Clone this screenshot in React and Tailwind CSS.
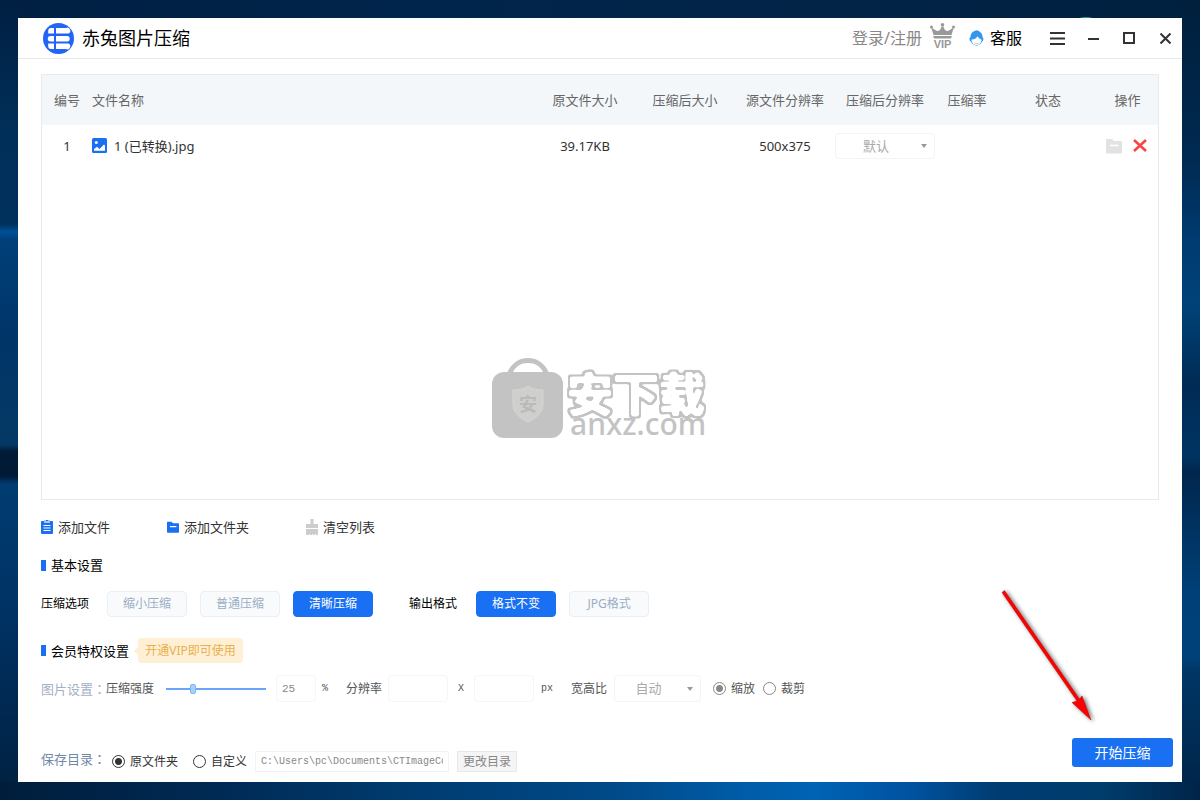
import React, { useState } from 'react';

const columns = [
    { key: 'id', label: '编号', className: 'w-[50px] text-center' },
    { key: 'name', label: '文件名称', className: 'text-left' },
    { key: 'size', label: '原文件大小', className: 'w-[100px] text-center' },
    { key: 'newSize', label: '压缩后大小', className: 'w-[100px] text-center' },
    { key: 'dim', label: '源文件分辨率', className: 'w-[100px] text-center' },
    { key: 'newDim', label: '压缩后分辨率', className: 'w-[100px] text-center' },
    { key: 'ratio', label: '压缩率', className: 'w-[64px] text-center' },
    { key: 'status', label: '状态', className: 'w-[98px] text-center' },
    { key: 'action', label: '操作', className: 'w-[61px] text-center' },
];

const files = [{ id: 1, name: '1 (已转换).jpg', size: '39.17KB', dim: '500x375' }];

function Wallpaper() {
    return (
        <svg className="absolute inset-0 w-full h-full" viewBox="0 0 1200 800" preserveAspectRatio="none" aria-hidden="true">
            <defs>
                <linearGradient id="top" x1="0" x2="1" y1="0" y2="0">
                    <stop offset="0" stopColor="#001f42" />
                    <stop offset="0.35" stopColor="#00254c" />
                    <stop offset="0.7" stopColor="#022447" />
                    <stop offset="1" stopColor="#00203f" />
                </linearGradient>
                <linearGradient id="left" x1="0" x2="0" y1="0" y2="1">
                    <stop offset="0" stopColor="#001f42" />
                    <stop offset="0.17" stopColor="#00305a" />
                    <stop offset="0.28" stopColor="#00305c" />
                    <stop offset="0.29" stopColor="#005099" />
                    <stop offset="0.3" stopColor="#003f78" />
                    <stop offset="0.42" stopColor="#003569" />
                    <stop offset="0.555" stopColor="#053964" />
                    <stop offset="0.565" stopColor="#011a36" />
                    <stop offset="0.595" stopColor="#011a36" />
                    <stop offset="0.605" stopColor="#003c70" />
                    <stop offset="0.75" stopColor="#003366" />
                    <stop offset="1" stopColor="#00203f" />
                </linearGradient>
                <linearGradient id="right" x1="0" x2="0" y1="0" y2="1">
                    <stop offset="0" stopColor="#001f3c" />
                    <stop offset="0.2" stopColor="#002a52" />
                    <stop offset="0.3" stopColor="#003a70" />
                    <stop offset="0.38" stopColor="#004379" />
                    <stop offset="0.48" stopColor="#002b55" />
                    <stop offset="0.57" stopColor="#003463" />
                    <stop offset="0.59" stopColor="#00264d" />
                    <stop offset="0.74" stopColor="#004078" />
                    <stop offset="0.82" stopColor="#00417a" />
                    <stop offset="0.84" stopColor="#003665" />
                    <stop offset="1" stopColor="#002347" />
                </linearGradient>
                <linearGradient id="bottom" x1="0" x2="1" y1="0" y2="0">
                    <stop offset="0" stopColor="#001d3b" />
                    <stop offset="0.18" stopColor="#002a54" />
                    <stop offset="0.35" stopColor="#003c71" />
                    <stop offset="0.52" stopColor="#004b8a" />
                    <stop offset="0.62" stopColor="#005ca8" />
                    <stop offset="0.68" stopColor="#0063b4" />
                    <stop offset="0.76" stopColor="#0052a0" />
                    <stop offset="0.83" stopColor="#003c72" />
                    <stop offset="0.92" stopColor="#003c6c" />
                    <stop offset="1" stopColor="#002449" />
                </linearGradient>
            </defs>
            <rect width="1200" height="18" fill="url(#top)" />
            <rect width="18" height="800" fill="url(#left)" />
            <rect x="1182" width="18" height="800" fill="url(#right)" />
            <rect y="782" width="1200" height="18" fill="url(#bottom)" />
            <ellipse cx="1086" cy="19" rx="7" ry="2" fill="#3b9c93" />
        </svg>
    );
}

function Logo() {
    return (
        <svg width="31" height="31" viewBox="0 0 31 31" aria-hidden="true">
            <circle cx="15.5" cy="15.5" r="15.5" fill="#2264f6" />
            <g fill="#fff">
                <path d="M8 5h3v5.500H5.200V8A3 3 0 0 1 8 5z" />
                <path d="M13 5h10a2.750 2.750 0 0 1 2.500 5.500H13z" />
                <path d="M11 13v5.500H7.500a2.750 2.750 0 0 1 0-5.500z" />
                <path d="M13 13h11a2.750 2.750 0 0 1 0 5.500H13z" />
                <path d="M5.200 20.500H11V26H8a3 3 0 0 1-2.800-3z" />
                <path d="M13 20.500h12.500A2.750 2.750 0 0 1 23 26H13z" />
            </g>
        </svg>
    );
}

function VipIcon() {
    return (
        <svg className="overflow-visible" width="25" height="26" viewBox="0 0 25 26" fill="#999" aria-hidden="true">
            <circle cx="12.500" cy="1.800" r="1.800" />
            <circle cx="1.500" cy="4" r="1.500" />
            <circle cx="23.500" cy="4" r="1.500" />
            <path d="M1.200 4.500l5.300 3.300c2 .6 4.300-.6 5-4.300h2c.7 3.700 3 4.900 5 4.300l5.300-3.300-2.300 7.500H3.500z" />
            <path d="M3.200 13h18.600l-.8 2.500H4z" />
            <text x="12.500" y="25" textAnchor="middle" className="font-['Liberation_Sans'] text-[11px] font-bold">VIP</text>
        </svg>
    );
}

function ServiceIcon() {
    return (
        <svg width="15" height="16" viewBox="0 0 14 16" aria-hidden="true">
            <path d="M1 7C1 3 4 .8 7.500.3 10 1.200 13 3 13 7c1.300 1 1.300 4-.5 4.800-.8 2-2.800 3.700-5.500 3.700S2.300 13.800 1.500 11.800C-.4 11-.4 8 1 7z" fill="#3397ee" />
            <path d="M2 9.500C5.500 9.500 7 8 8 6.300c1 1.700 2 2.500 4 3.200 0 3.500-2 5.500-5 5.500s-5-2-5-5.500z" fill="#fff" />
            <path d="M5 13c1.200 1 2.800 1 4 0" stroke="#8fc6f7" fill="none" />
        </svg>
    );
}

function ImageIcon() {
    return (
        <svg width="15" height="15" viewBox="0 0 15 15" aria-hidden="true">
            <rect width="15" height="15" rx="1.500" fill="#1970f2" />
            <circle cx="4.300" cy="4.500" r="1.500" fill="#fff" />
            <path d="M2 12.800V11l3-2.300L7.500 11 12 6.500l1 1v5.300z" fill="#fff" />
        </svg>
    );
}

function FolderIcon({ className, size = 12 }) {
    return (
        <svg className={className} width={size} height={size} viewBox="0 0 16 16" aria-hidden="true">
            <path d="M1 1h5l2 2h7a1 1 0 0 1 1 1v10.500a1 1 0 0 1-1 1H1a1 1 0 0 1-1-1V2a1 1 0 0 1 1-1z" fill="currentColor" />
            <path d="M4 7.500h8.500" stroke="#fff" strokeWidth="1.600" />
        </svg>
    );
}

function ClipboardIcon() {
    return (
        <svg width="12" height="14" viewBox="0 0 12 14" aria-hidden="true">
            <rect y="1" width="12" height="13" rx="1" fill="#1970f2" />
            <rect x="3" width="6" height="3" fill="#a3c6fa" />
            <rect x="5" width="2" height="1" fill="#1970f2" />
            <path d="M2.500 5.500h7M2.500 8h7M2.500 10.500h7" stroke="#fff" />
        </svg>
    );
}

function BroomIcon() {
    return (
        <svg width="12" height="16" viewBox="0 0 12 16" fill="#ccc" aria-hidden="true">
            <path d="M4.500 0h3v5H12v4H0V5h4.500z" />
            <path d="M0 10h12v6h-2v-1H9v1H7v-1H6v1H4v-1H3v1H0z" />
        </svg>
    );
}

function Watermark() {
    return (
        <svg className="absolute left-[450px] top-[283px]" width="218" height="96" viewBox="0 0 218 96">
            <defs>
                {/* rounded white letters with a grey outline */}
                <filter id="outline" x="-5%" y="-10%" width="110%" height="120%" colorInterpolationFilters="sRGB">
                    <feMorphology in="SourceAlpha" operator="dilate" radius="2" />
                    <feGaussianBlur stdDeviation="1.3" />
                    <feComponentTransfer result="outer">
                        <feFuncA type="linear" slope="4" intercept="-1.200" />
                    </feComponentTransfer>
                    <feFlood floodColor="#c3c3c3" />
                    <feComposite in2="outer" operator="in" result="border" />
                    <feGaussianBlur in="SourceAlpha" stdDeviation="1.200" />
                    <feComponentTransfer result="inner">
                        <feFuncA type="linear" slope="5" intercept="-1.700" />
                    </feComponentTransfer>
                    <feFlood floodColor="#fff" />
                    <feComposite in2="inner" operator="in" result="fill" />
                    <feMerge>
                        <feMergeNode in="border" />
                        <feMergeNode in="fill" />
                    </feMerge>
                </filter>
            </defs>
            <path d="M17 17C20 8 27 2.500 36 2.500S52 8 55 17" fill="none" stroke="#c3c3c3" strokeWidth="5" />
            <rect y="14" width="71" height="66" rx="12" fill="#c3c3c3" />
            <path d="M36 28c4 3 9 4 15 4v14c0 9-7 14-15 18-8-4-15-9-15-18V32c6 0 11-1 15-4z" fill="#cfd0ce" stroke="#d6d6d4" />
            <text x="36" y="53" textAnchor="middle" fill="#b9bab9" className="font-['Noto_Sans_CJK_SC'] text-[18px] font-bold">安</text>
            <text x="75" y="53" fill="#fff" filter="url(#outline)" className="font-['Noto_Sans_CJK_SC'] text-[46px] font-black">安下载</text>
            <text x="78" y="77" fill="#c3c3c3" className="font-['Noto_Sans'] text-[30px] font-medium">anxz.com</text>
        </svg>
    );
}

function RedArrow() {
    return (
        <svg className="absolute right-[77px] bottom-[52px] pointer-events-none" width="110" height="145" viewBox="0 0 110 145" aria-hidden="true">
            <defs>
                <filter id="arrow-shadow" x="-20%" y="-20%" width="150%" height="150%">
                    <feDropShadow dx="2" dy="1" stdDeviation="2" floodColor="#000" floodOpacity="0.6" />
                </filter>
            </defs>
            <g filter="url(#arrow-shadow)" fill="#fe0000">
                <path d="M7 7.500L9.500 5.500 84.500 114 87 111 96 135 77 117.500 82 116z" stroke="#9c1414" strokeWidth="0.500" />
            </g>
        </svg>
    );
}

function Dropdown({ label, value, className }) {
    return (
        <div className={`relative ${className}`}>
            <select aria-label={label} className="w-full h-full appearance-none rounded border border-[#f0f5fa] bg-white text-center pr-[18px] text-[13px] text-[#aaa] outline-none">
                <option>{value}</option>
            </select>
            <svg className="absolute right-2 top-1/2 -translate-y-1/2 pointer-events-none" width="6" height="4" viewBox="0 0 6 4" fill="#999" aria-hidden="true">
                <path d="M0 0h6L3 4z" />
            </svg>
        </div>
    );
}

function Radio({ name, label, checked, onChange, muted }) {
    return (
        <label className={`flex items-center gap-[5px] text-[12px] ${muted ? 'text-[#555]' : 'text-[#333]'}`}>
            <input
                type="radio"
                name={name}
                checked={checked}
                onChange={onChange}
                className={`appearance-none size-[13px] rounded-full border ${muted
                    ? 'border-[#888] checked:bg-[radial-gradient(circle,#888_3px,transparent_4px)]'
                    : 'border-[#333] checked:bg-[radial-gradient(circle,#333_3px,transparent_4px)]'
                    }`}
            />
            {label}
        </label>
    );
}

function OptionButton({ active, onClick, children }) {
    return (
        <button
            onClick={onClick}
            className={`w-20 h-[26px] rounded border text-[12px] ${active
                ? 'bg-[#1970f2] border-[#1970f2] text-white'
                : 'bg-[#f9fafc] border-[#e8eff7] text-[#9aaec5]'
                }`}
        >
            {children}
        </button>
    );
}

function SectionTitle({ children }) {
    return (
        <h2 className="flex items-center gap-[5px] text-[13px] leading-5 text-black">
            <span className="w-[5px] h-[11px] bg-[#1970f2]"></span>
            {children}
        </h2>
    );
}

export default function App() {
    const [mode, setMode] = useState('清晰压缩');
    const [format, setFormat] = useState('格式不变');
    const [strength, setStrength] = useState(25);
    const [fit, setFit] = useState('缩放');
    const [target, setTarget] = useState('原文件夹');

    const inputClass = 'rounded border border-[#f3f6fa] bg-white text-[#888] outline-none';

    return (
        <div className="relative min-h-screen flex p-[18px] bg-[#00254c] font-['Noto_Sans','Noto_Sans_CJK_SC',sans-serif]">
            <Wallpaper />
            <div className="relative flex-1 min-w-0 flex flex-col bg-white">
                {/* Title bar */}
                <header className="flex items-center h-[41px] border-b border-[#e8e8e8] pl-[25px] pr-[11px]">
                    <Logo />
                    <h1 className="ml-2 text-[18px] leading-6 text-black">赤兔图片压缩</h1>
                    <a href="#login" className="ml-auto text-[16px] leading-6 text-[#888]">登录/注册</a>
                    <div className="ml-2 pb-1"><VipIcon /></div>
                    <a href="#service" className="ml-[14px] flex items-center gap-1.5 text-[16px] leading-6 text-black">
                        <ServiceIcon />
                        客服
                    </a>
                    <button aria-label="菜单" className="ml-7">
                        <svg width="15" height="13" viewBox="0 0 15 13" stroke="#333" strokeWidth="2"><path d="M0 1h15M0 6.500h15M0 12h15" /></svg>
                    </button>
                    <button aria-label="最小化" className="ml-[23px]">
                        <svg width="11" height="12" viewBox="0 0 11 12" stroke="#333" strokeWidth="2"><path d="M0 7h11" /></svg>
                    </button>
                    <button aria-label="最大化" className="ml-6">
                        <svg width="12" height="12" viewBox="0 0 12 12" stroke="#333" strokeWidth="2" fill="none"><path d="M1 1h10v10H1z" /></svg>
                    </button>
                    <button aria-label="关闭" className="ml-[25px]">
                        <svg width="11" height="11" viewBox="0 0 11 11" stroke="#333" strokeWidth="2"><path d="M.5.5l10 10M10.500.5l-10 10" /></svg>
                    </button>
                </header>

                <main className="flex-1 flex flex-col pt-[15px] pl-[23px]">
                    {/* File list */}
                    <div className="relative flex-1 mr-[23px] border border-[#e8eaec]">
                        <table className="w-full table-fixed text-[13px] leading-5 text-[#333]">
                            <thead>
                                <tr className="h-[50px] bg-[#f3f7fa] text-[#666]">
                                    {columns.map((col) => (
                                        <th key={col.key} className={`font-normal whitespace-nowrap ${col.className}`}>{col.label}</th>
                                    ))}
                                </tr>
                            </thead>
                            <tbody>
                                {files.map((file) => (
                                    <tr key={file.id} className="h-[41px] text-center">
                                        <td>{file.id}</td>
                                        <td>
                                            <div className="flex items-center gap-[7px]">
                                                <ImageIcon />
                                                {file.name}
                                            </div>
                                        </td>
                                        <td>{file.size}</td>
                                        <td></td>
                                        <td>{file.dim}</td>
                                        <td><Dropdown label="压缩后分辨率" value="默认" className="h-[26px]" /></td>
                                        <td></td>
                                        <td></td>
                                        <td>
                                            <div className="flex items-center gap-[11px] pl-[9px]">
                                                <button aria-label="打开文件夹" className="text-[#e2e2e2]"><FolderIcon size={16} /></button>
                                                <button aria-label="删除">
                                                    <svg width="14" height="13" viewBox="0 0 14 13" stroke="#fa4343" strokeWidth="2.600"><path d="M1 1l12 11M13 1L1 12" /></svg>
                                                </button>
                                            </div>
                                        </td>
                                    </tr>
                                ))}
                            </tbody>
                        </table>
                        <Watermark />
                    </div>

                    {/* Actions */}
                    <div className="mt-[17px] flex gap-[57px] text-[13px] leading-5 text-[#333]">
                        <button className="flex items-center gap-[5px]"><ClipboardIcon />添加文件</button>
                        <button className="flex items-center gap-[5px]"><FolderIcon className="text-[#1970f2]" />添加文件夹</button>
                        <button className="flex items-center gap-[5px]"><BroomIcon />清空列表</button>
                    </div>

                    {/* Basic settings */}
                    <div className="mt-[18px]">
                        <SectionTitle>基本设置</SectionTitle>
                    </div>
                    <div className="mt-4 flex items-center text-[12px] text-black">
                        <span>压缩选项</span>
                        <div className="ml-[18px] flex gap-[13px]">
                            {['缩小压缩', '普通压缩', '清晰压缩'].map((item) => (
                                <OptionButton key={item} active={mode === item} onClick={() => setMode(item)}>{item}</OptionButton>
                            ))}
                        </div>
                        <span className="ml-9">输出格式</span>
                        <div className="ml-[19px] flex gap-[13px]">
                            {['格式不变', 'JPG格式'].map((item) => (
                                <OptionButton key={item} active={format === item} onClick={() => setFormat(item)}>{item}</OptionButton>
                            ))}
                        </div>
                    </div>

                    {/* Member settings */}
                    <div className="mt-[21px] flex items-center">
                        <SectionTitle>会员特权设置</SectionTitle>
                        <span className="ml-[5px] border-y-4 border-r-4 border-y-transparent border-r-[#fff0d5]"></span>
                        <span className="w-[105px] h-[25px] rounded bg-[#fff0d5] text-center text-[12px] leading-[25px] text-[#e8b04c]">开通VIP即可使用</span>
                    </div>
                    <div className="mt-3 flex items-center text-[12px] text-[#555]">
                        <span className="w-[65px] whitespace-nowrap text-[13px] leading-4 text-[#a3b1c4]">图片设置<span className="font-['Noto_Sans_CJK_TC']">：</span></span>
                        <label htmlFor="strength">压缩强度</label>
                        <input
                            id="strength"
                            type="range"
                            value={strength}
                            onChange={(e) => setStrength(Number(e.target.value))}
                            className="ml-3 w-[100px] h-[2px] appearance-none bg-[#6ba5fb] outline-none [&::-webkit-slider-thumb]:appearance-none [&::-webkit-slider-thumb]:w-[6px] [&::-webkit-slider-thumb]:h-[10px] [&::-webkit-slider-thumb]:rounded-[2px] [&::-webkit-slider-thumb]:border [&::-webkit-slider-thumb]:border-[#7db4fb] [&::-webkit-slider-thumb]:bg-[#a5d2fd]"
                        />
                        <input
                            aria-label="压缩强度百分比"
                            value={strength}
                            onChange={(e) => setStrength(Number(e.target.value) || 0)}
                            className={`ml-[10px] w-10 h-[27px] px-[5px] font-['Liberation_Mono',monospace] text-[11px] ${inputClass}`}
                        />
                        <span className="ml-1.5 font-['Liberation_Mono',monospace] text-[10px]">%</span>
                        <label htmlFor="width" className="ml-[18px]">分辨率</label>
                        <input id="width" className={`ml-1.5 w-[60px] h-[27px] px-1.5 ${inputClass}`} />
                        <span className="ml-[10px] font-['Liberation_Mono',monospace] text-[10px]">X</span>
                        <input aria-label="高度" className={`ml-[10px] w-[60px] h-[27px] px-1.5 ${inputClass}`} />
                        <span className="ml-[7px] font-['Liberation_Mono',monospace] text-[10px]">px</span>
                        <span className="ml-[18px]">宽高比</span>
                        <Dropdown label="宽高比" value="自动" className="ml-[7px] w-[87px] h-[27px]" />
                        <div className="ml-3 flex gap-2">
                            <Radio name="fit" label="缩放" muted checked={fit === '缩放'} onChange={() => setFit('缩放')} />
                            <Radio name="fit" label="裁剪" muted checked={fit === '裁剪'} onChange={() => setFit('裁剪')} />
                        </div>
                    </div>

                    {/* Output folder */}
                    <footer className="mt-9 pb-[10px] pr-[9px] flex items-start justify-between">
                        <div className="mt-[13px] h-[21px] flex items-center">
                            <span className="w-[71px] self-start whitespace-nowrap text-[13px] leading-4 text-[#7088a8]">保存目录<span className="font-['Noto_Sans_CJK_TC']">：</span></span>
                            <div className="flex gap-[15px]">
                                <Radio name="target" label="原文件夹" checked={target === '原文件夹'} onChange={() => setTarget('原文件夹')} />
                                <Radio name="target" label="自定义" checked={target === '自定义'} onChange={() => setTarget('自定义')} />
                            </div>
                            <input
                                aria-label="保存路径"
                                defaultValue="C:\Users\pc\Documents\CTImageCompress"
                                className="ml-2 w-[194px] h-[21px] px-[5px] border border-[#f0f3f8] font-['Liberation_Mono',monospace] text-[10px] text-[#888] outline-none"
                            />
                            <button className="ml-2 w-[60px] h-[21px] border border-[#e8e8e8] bg-[#f5f5f5] text-[12px] leading-none text-[#888]">更改目录</button>
                        </div>
                        <button className="w-[101px] h-[29px] rounded-[3px] bg-[#1970f2] text-[14px] text-white">开始压缩</button>
                    </footer>
                </main>
                <RedArrow />
            </div>
        </div>
    );
}
